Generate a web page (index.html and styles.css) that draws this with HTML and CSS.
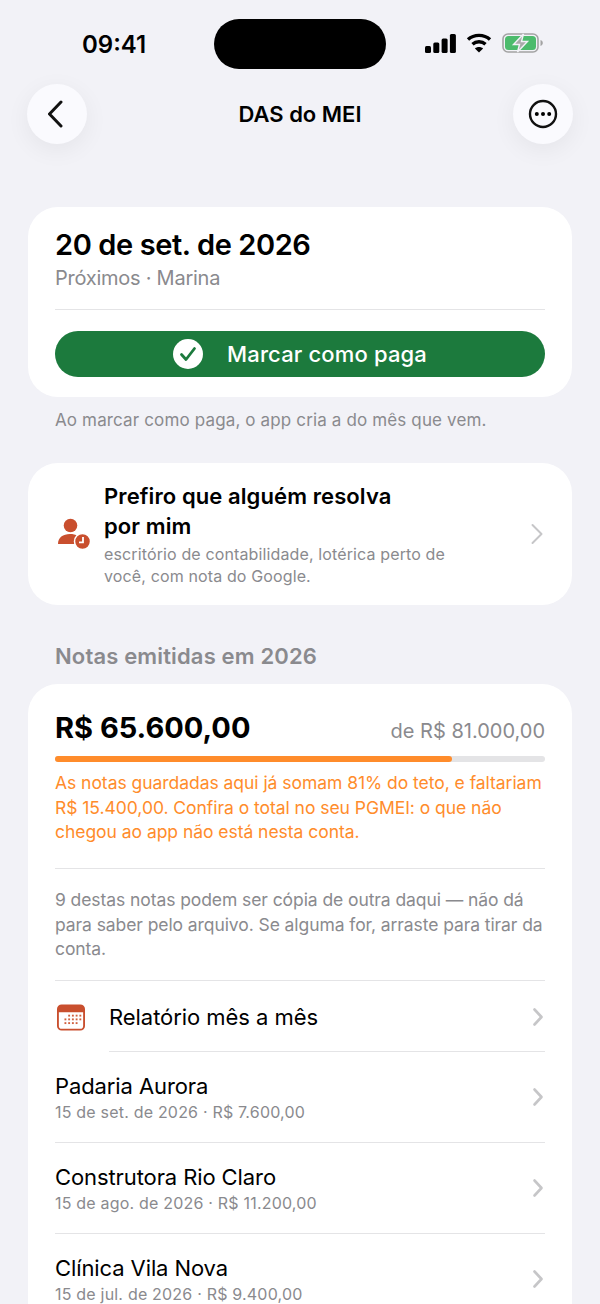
FILE: index.html
```html
<!DOCTYPE html>
<html lang="pt-BR">
<head>
  <title>DAS do MEI</title>
  <link rel="stylesheet" href="styles.css">
</head>
<body>
  <div class="screen">
    <div class="status-bar">
      <span class="time">09:41</span>
      <div class="island"></div>
      <div class="status-icons">
        <svg width="31" height="19" viewBox="0 0 31 19"><rect x="0" y="12" width="6" height="7" rx="1.5"/><rect x="8.3" y="8.5" width="6" height="10.5" rx="1.5"/><rect x="16.6" y="4.5" width="6" height="14.5" rx="1.5"/><rect x="24.9" y="0" width="6" height="19" rx="1.5"/></svg>
        <svg width="26" height="20" viewBox="0 0 26 20"><path d="M2 6.5C8 1 18 1 24 6.5" fill="none" stroke="#000" stroke-width="3.4"/><path d="M6.5 11.2C10 8 16 8 19.5 11.2" fill="none" stroke="#000" stroke-width="3.4"/><path d="M13 19.5 8.9 15.4C11 13.4 15 13.4 17.1 15.4Z"/></svg>
        <svg width="42" height="20" viewBox="0 0 42 20"><rect x="1" y="1" width="35" height="18" rx="5" fill="none" stroke="#a3a3a3" stroke-width="1.6"/><rect x="3" y="3" width="31" height="14" rx="3.5" fill="#4cbb6c"/><path d="M38.5 7v6c1.4-.4 2.3-1.6 2.3-3s-.9-2.600-2.300-3Z" fill="#a3a3a3"/><path d="M21.500 1 11.500 11.500h6L15.500 19l10-10.500h-6Z" fill="#a9a9a9" stroke="#f2f2f7" stroke-width="1.4"/></svg>
      </div>
    </div>

    <div class="nav-bar">
      <button class="round-btn">
        <svg width="18" height="28" viewBox="0 0 18 28"><path d="M13 2 1.500 14 13 26" fill="none" stroke="#111" stroke-width="3" stroke-linecap="round" stroke-linejoin="round"/></svg>
      </button>
      <h1>DAS do MEI</h1>
      <button class="round-btn">
        <svg width="30" height="30" viewBox="0 0 30 30"><circle cx="15" cy="15" r="13" fill="none" stroke="#111" stroke-width="2.400"/><circle cx="8.800" cy="15" r="2"/><circle cx="15" cy="15" r="2"/><circle cx="21.200" cy="15" r="2"/></svg>
      </button>
    </div>

    <section class="card due-card">
      <div class="due-date">20 de set. de 2026</div>
      <div class="due-meta">Próximos · Marina</div>
      <div class="divider"></div>
      <button class="pay-btn">
        <svg width="30" height="30" viewBox="0 0 30 30"><circle cx="15" cy="15" r="15" fill="#fff"/><path d="M8.500 15.500 13 20.500 21.500 9.500" fill="none" stroke="#1c7a3d" stroke-width="2.800" stroke-linecap="round" stroke-linejoin="round"/></svg>
        <span>Marcar como paga</span>
      </button>
    </section>
    <p class="hint">Ao marcar como paga, o app cria a do mês que vem.</p>

    <section class="card help-card">
      <svg class="help-icon" width="34" height="34" viewBox="0 0 34 34">
        <circle cx="13.500" cy="8.500" r="6.800"/>
        <path d="M1 27c0-6.500 5-10 12-10 3 0 5.500.6 7.500 1.800-2.500 2-3.500 5-3 8.200Z"/>
        <circle cx="25.500" cy="24.500" r="8" stroke="#fff" stroke-width="1.500"/>
        <path d="M26 20V25.300H22" fill="none" stroke="#fff" stroke-width="1.800"/>
      </svg>
      <div class="help-text">
        <div class="help-title">Prefiro que alguém resolva por mim</div>
        <div class="help-sub">escritório de contabilidade, lotérica perto de você, com nota do Google.</div>
      </div>
      <svg class="chevron" width="14" height="22" viewBox="0 0 14 22"><path d="M2.500 2 11.500 11l-9 9" fill="none" stroke="#c6c6c8" stroke-width="2" stroke-linecap="round" stroke-linejoin="round"/></svg>
    </section>

    <h2 class="section-title">Notas emitidas em 2026</h2>

    <section class="card notes-card">
      <div class="total-row">
        <span class="total">R$ 65.600,00</span>
        <span class="limit">de R$ 81.000,00</span>
      </div>
      <div class="progress"><div class="progress-fill" style="width: 81%"></div></div>
      <p class="warning">As notas guardadas aqui já somam 81% do teto, e faltariam R$ 15.400,00. Confira o total no seu PGMEI: o que não chegou ao app não está nesta conta.</p>
      <div class="divider"></div>
      <p class="note">9 destas notas podem ser cópia de outra daqui — não dá para saber pelo arquivo. Se alguma for, arraste para tirar da conta.</p>
      <div class="divider"></div>

      <div class="report-row">
        <svg class="report-icon" width="28" height="27" viewBox="0 0 30 28">
          <rect x="1" y="1" width="28" height="26" rx="4" fill="#fff" stroke="#c94f2e" stroke-width="2"/>
          <path d="M1 5a4 4 0 0 1 4-4h20a4 4 0 0 1 4 4v3.500H1Z" fill="#c94f2e"/>
          <g fill="#d0603f">
            <rect x="12" y="11" width="2" height="2"/><rect x="16" y="11" width="2" height="2"/><rect x="20" y="11" width="2" height="2"/><rect x="24" y="11" width="2" height="2"/>
            <rect x="8" y="15" width="2" height="2"/><rect x="12" y="15" width="2" height="2"/><rect x="16" y="15" width="2" height="2"/><rect x="20" y="15" width="2" height="2"/><rect x="24" y="15" width="2" height="2"/>
            <rect x="8" y="19" width="2" height="2"/><rect x="12" y="19" width="2" height="2"/><rect x="16" y="19" width="2" height="2"/><rect x="20" y="19" width="2" height="2"/>
          </g>
        </svg>
        <span class="report-label">Relatório mês a mês</span>
        <svg class="chevron" width="14" height="22" viewBox="0 0 14 22"><path d="M3.500 3.500 10.500 11l-7 7.500" fill="none" stroke="#c6c6c8" stroke-width="2.600" stroke-linecap="round" stroke-linejoin="round"/></svg>
      </div>
      <div class="divider inset"></div>

      <div class="note-row">
        <div class="note-info">
          <div class="note-name">Padaria Aurora</div>
          <div class="note-detail">15 de set. de 2026 · R$ 7.600,00</div>
        </div>
        <svg class="chevron" width="14" height="22" viewBox="0 0 14 22"><path d="M3.500 3.500 10.500 11l-7 7.500" fill="none" stroke="#c6c6c8" stroke-width="2.600" stroke-linecap="round" stroke-linejoin="round"/></svg>
      </div>
      <div class="divider"></div>
      <div class="note-row">
        <div class="note-info">
          <div class="note-name">Construtora Rio Claro</div>
          <div class="note-detail">15 de ago. de 2026 · R$ 11.200,00</div>
        </div>
        <svg class="chevron" width="14" height="22" viewBox="0 0 14 22"><path d="M3.500 3.500 10.500 11l-7 7.500" fill="none" stroke="#c6c6c8" stroke-width="2.600" stroke-linecap="round" stroke-linejoin="round"/></svg>
      </div>
      <div class="divider"></div>
      <div class="note-row">
        <div class="note-info">
          <div class="note-name">Clínica Vila Nova</div>
          <div class="note-detail">15 de jul. de 2026 · R$ 9.400,00</div>
        </div>
        <svg class="chevron" width="14" height="22" viewBox="0 0 14 22"><path d="M3.500 3.500 10.500 11l-7 7.500" fill="none" stroke="#c6c6c8" stroke-width="2.600" stroke-linecap="round" stroke-linejoin="round"/></svg>
      </div>
    </section>
  </div>
</body>
</html>
```

FILE: styles.css
```css
* {
  box-sizing: border-box;
}

html, body {
  margin: 0;
  height: 1304px;
  overflow: hidden;
}

body {
  font-family: Inter, "Liberation Sans", sans-serif;
  background-color: #f2f2f7;
  color: #000;
}

.screen {
  padding: 19px 28px 0;
  height: 1304px;
  overflow: hidden;
}

.status-bar {
  display: flex;
  align-items: center;
  height: 50px;
  margin: 0 0 15px;
  padding: 0 28px 0 54px;
}

.time {
  font-size: 24px;
  font-weight: 600;
  width: 132px;
}

.island {
  width: 172px;
  height: 50px;
  background-color: #000;
  border-radius: 25px;
}

.status-icons {
  display: flex;
  align-items: center;
  gap: 10px;
  margin-top: -2px;
  margin-left: auto;
}

.nav-bar {
  display: flex;
  align-items: center;
  justify-content: space-between;
  margin: 0 -1px 63px;
}

.nav-bar h1 {
  margin: 0;
  font-size: 22px;
  font-weight: 600;
}

.round-btn {
  display: flex;
  align-items: center;
  justify-content: center;
  width: 60px;
  height: 60px;
  padding: 0;
  border: none;
  border-radius: 50%;
  background-color: #fafafe;
  box-shadow: 0 6px 24px rgba(0, 0, 0, 0.06);
}

.card {
  background-color: #fff;
  border-radius: 30px;
}

.due-card {
  padding: 20px 27px;
  height: 190px;
}

.due-date {
  font-size: 29px;
  font-weight: 600;
  line-height: 36px;
  letter-spacing: -0.4px;
}

.due-meta {
  font-size: 20px;
  line-height: 30px;
  color: #8a8a8e;
  letter-spacing: -0.25px;
}

.divider {
  height: 1px;
  background-color: #e4e4e6;
}

.due-card .divider {
  margin-top: 16px;
}

.pay-btn {
  display: flex;
  align-items: center;
  justify-content: center;
  gap: 24px;
  width: 100%;
  height: 46px;
  margin-top: 21px;
  border: none;
  border-radius: 23px;
  background-color: #1c7a3d;
  color: #fff;
  font-family: inherit;
  font-size: 22px;
  font-weight: 500;
  letter-spacing: 0.15px;
}

.hint {
  margin: 12px 27px 0;
  font-size: 17px;
  line-height: 22px;
  color: #8a8a8e;
  letter-spacing: 0.14px;
}

.help-card {
  display: flex;
  align-items: center;
  margin-top: 32px;
  height: 142px;
  padding: 0 28px 0 29px;
}

.help-icon {
  flex: none;
  fill: #c94f2e;
  margin-right: 13px;
}

.help-text {
  flex: 1;
}

.help-title {
  width: 320px;
  font-size: 22px;
  font-weight: 600;
  line-height: 30px;
  letter-spacing: 0.1px;
}

.help-sub {
  width: 360px;
  font-size: 16px;
  line-height: 22px;
  color: #8a8a8e;
  margin-top: 2px;
  letter-spacing: 0.13px;
}

.chevron {
  flex: none;
}

.section-title {
  margin: 37px 27px 14px;
  font-size: 22px;
  font-weight: 600;
  line-height: 28px;
  color: #8a8a8e;
  letter-spacing: 0.15px;
}

.notes-card {
  padding: 25px 27px 0;
  height: 700px;
}

.total-row {
  display: flex;
  align-items: baseline;
  justify-content: space-between;
}

.total {
  font-size: 29px;
  font-weight: 700;
  line-height: 38px;
}

.limit {
  font-size: 20px;
  color: #8a8a8e;
}

.progress {
  height: 6px;
  margin-top: 9px;
  border-radius: 3px;
  background-color: #e4e4e6;
}

.progress-fill {
  height: 100%;
  border-radius: 3px;
  background-color: #ff8c2b;
}

.warning {
  margin: 9px 0 23.500px;
  font-size: 17.500px;
  line-height: 24.500px;
  color: #ff8c2b;
  letter-spacing: -0.04px;
}

.note {
  margin: 19px 0 18.500px;
  font-size: 17.500px;
  line-height: 24.500px;
  color: #8a8a8e;
  letter-spacing: -0.08px;
}

.report-row {
  display: flex;
  align-items: center;
  height: 70px;
  padding-top: 2px;
}

.report-icon {
  flex: none;
  margin-left: 2px;
  margin-right: 24px;
}

.report-label {
  flex: 1;
  font-size: 22px;
  letter-spacing: -0.05px;
}

.divider.inset {
  margin-left: 54px;
}

.note-row {
  display: flex;
  align-items: center;
  height: 90px;
}

.note-info {
  flex: 1;
}

.note-name {
  font-size: 22px;
  line-height: 28px;
  letter-spacing: -0.1px;
}

.note-detail {
  margin-top: 1px;
  font-size: 16px;
  line-height: 22px;
  color: #8a8a8e;
  letter-spacing: 0.2px;
}
```
